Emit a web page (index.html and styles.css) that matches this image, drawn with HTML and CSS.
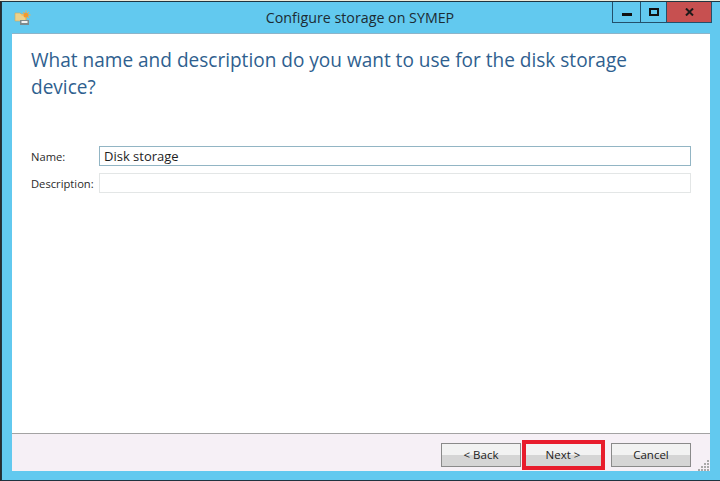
FILE: index.html
```html
<!DOCTYPE html>
<html lang="en">
<head>
<meta charset="utf-8">
<title>Configure storage on SYMEP</title>
<link rel="stylesheet" href="styles.css">
</head>
<body>
<div class="window">
  <header class="titlebar">
    <div class="title-left">
      <svg class="app-icon" width="17" height="17" viewBox="0 0 17 17">
        <path d="M1 4h5l1 1h5v7H1z" fill="#ecd28c" stroke="#c9a860" stroke-width=".6"/>
        <circle cx="12" cy="6" r="2.6" fill="#f29a2e"/>
        <path d="M12 1.500v2M12 8.500v2M7.500 6h2M14.500 6h2M9 3l1.200 1.200M15 3l-1.200 1.200M15 9l-1.200-1.200" stroke="#f5b04a" stroke-width="1"/>
        <rect x="6" y="11" width="9" height="5" fill="#7d8a8c"/>
        <rect x="7.500" y="12" width="6" height="2" fill="#f4f4f4"/>
      </svg>
    </div>
    <div class="title">Configure storage on SYMEP</div>
    <div class="controls">
      <div class="ctl ctl-min"><span class="min-glyph"></span></div>
      <div class="ctl ctl-max"><span class="max-glyph"></span></div>
      <div class="ctl ctl-close">
        <svg width="9" height="8" viewBox="0 0 9 8"><path d="M1 0.500L8 7.500M8 0.500L1 7.500" stroke="#1d1a1a" stroke-width="2"/></svg>
      </div>
    </div>
  </header>
  <div class="client">
    <main class="content">
      <h1 class="heading">What name and description do you want to use for the disk storage device?</h1>
      <div class="form">
        <div class="row">
          <label class="label">Name:</label>
          <div class="input input-active">Disk storage</div>
        </div>
        <div class="row">
          <label class="label">Description:</label>
          <div class="input"></div>
        </div>
      </div>
    </main>
    <footer class="footer">
      <button class="btn">&lt; Back</button>
      <button class="btn btn-next">Next &gt;</button>
      <button class="btn btn-cancel">Cancel</button>
      <svg class="grip" width="12" height="12" viewBox="0 0 12 12">
        <g fill="#a9a9a9">
          <rect x="9" y="1" width="2" height="2"/>
          <rect x="6" y="4" width="2" height="2"/><rect x="9" y="4" width="2" height="2"/>
          <rect x="3" y="7" width="2" height="2"/><rect x="6" y="7" width="2" height="2"/><rect x="9" y="7" width="2" height="2"/>
          <rect x="0" y="10" width="2" height="2"/><rect x="3" y="10" width="2" height="2"/><rect x="6" y="10" width="2" height="2"/><rect x="9" y="10" width="2" height="2"/>
        </g>
      </svg>
    </footer>
  </div>
</div>
</body>
</html>
```
FILE: styles.css
```css
* { box-sizing: border-box; }
html, body { margin: 0; padding: 0; }
body {
  width: 720px;
  height: 481px;
  overflow: hidden;
  background: linear-gradient(#ece8d8 0 1px, #2b2b2b 1px);
  font-family: "Open Sans", "Noto Sans", sans-serif;
}
.window {
  margin-left: 1px;
  position: relative;
  top: 1px;
  width: 719px;
  height: 480px;
  background: #62c9ef;
  border-top: 1px solid #1f3440;
  border-left: 1px solid #1f3440;
  border-bottom: 1px solid #1f3440;
  display: flex;
  flex-direction: column;
  padding: 0 10px 9px 10px;
}
.titlebar {
  height: 32px;
  flex: none;
  display: grid;
  grid-template-columns: 1fr auto 1fr;
  align-items: start;
  border-bottom: 1px solid #8db4c9;
}
.title-left { padding: 7px 0 0 2px; }
.app-icon { display: block; }
.title {
  font-size: 14.250px;
  color: #1c2b33;
  padding: 6px 2px 0 0;
  line-height: 20px;
}
.controls {
  justify-self: end;
  display: flex;
  height: 21px;
  margin-right: -2px;
  border: 1px solid #23506b;
  border-top: none;
}
.ctl { display: flex; align-items: center; justify-content: center; height: 100%; }
.ctl-min { width: 28px; border-right: 1px solid #23506b; }
.ctl-max { width: 26px; border-right: 1px solid #23506b; }
.ctl-close { width: 44px; background: #c75050; }
.min-glyph { width: 10px; height: 3px; background: #111; margin-top: 5px; }
.max-glyph { width: 10px; height: 8px; border: 2px solid #111; }
.client {
  flex: 1;
  display: flex;
  flex-direction: column;
  background: #fff;
  min-height: 0;
}
.content { flex: 1; padding: 13px 19px 0 19px; }
.heading {
  margin: 0;
  font-weight: 400;
  font-size: 19.050px;
  line-height: 27px;
  color: #2f5f8f;
  width: 620px;
}
.form {
  margin-top: 45px;
  display: flex;
  flex-direction: column;
  gap: 7px;
}
.row { display: flex; align-items: center; }
.label {
  width: 68px;
  flex: none;
  font-size: 11.200px;
  color: #2a2a2a;
}
.input {
  flex: 1;
  height: 20px;
  border: 1px solid #e3e6e6;
  font-size: 13px;
  line-height: 18px;
  padding-left: 4px;
  color: #1e1e1e;
}
.input-active { border-color: #92b5c4; }
.footer {
  position: relative;
  flex: none;
  height: 38px;
  background: #f6f0f6;
  border-top: 1px solid #a3a3a3;
  display: flex;
  align-items: center;
  justify-content: flex-end;
  padding: 0 19px 0 0;
}
.btn {
  width: 80px;
  height: 24px;
  font: 11.500px "Open Sans", "Noto Sans", sans-serif;
  color: #222;
  border: 1px solid #8a8a8a;
  background: linear-gradient(#f2f2f2 0 50%, #d5d5d5 50% 100%);
  padding: 0 0 2px;
  margin-top: 5px;
}
.btn-next {
  width: 83px;
  height: 30px;
  margin: 5px 6px 0 1px;
  border: 4px solid #e81c2c;
  padding: 0 1px 2px 0;
}
.grip { position: absolute; right: 0; bottom: 0; }
```
